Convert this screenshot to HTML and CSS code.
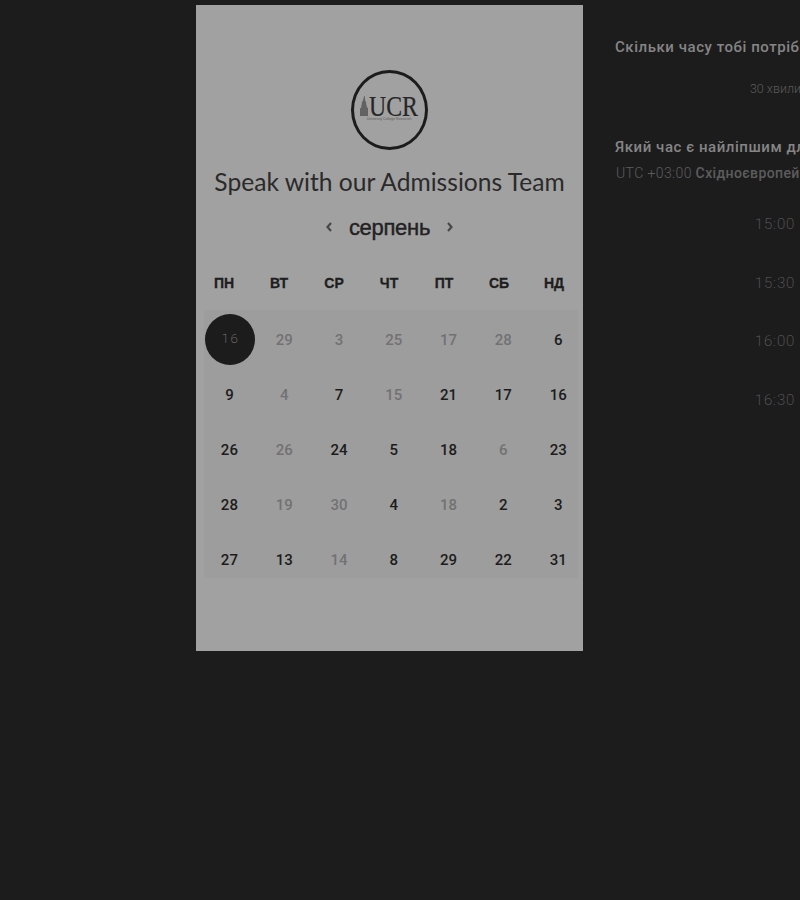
FILE: index.html
```html
<!DOCTYPE html>
<html lang="uk">
<head>
<meta charset="utf-8">
<title>Speak with our Admissions Team</title>
<link rel="stylesheet" href="styles.css">
</head>
<body>
<main class="page">
  <section class="panel">
    <div class="logo">
      <div class="logo-mark">
        <svg class="tower" viewBox="0 0 9 20" width="9" height="20" aria-hidden="true">
          <path d="M4.200 0h.6l.4 5 .9 1v3l.6-.5v2.500l1.300 1V20H0v-7.500l1.300-1V8.500l.6.500V6l.9-1z" fill="#626262"/>
        </svg>
        <span class="logo-letters">UCR</span>
      </div>
      <div class="logo-sub">University College Roosevelt</div>
    </div>
    <h1 class="title">Speak with our Admissions Team</h1>
    <div class="month">
      <svg class="chev" viewBox="0 0 8 12" width="8" height="12" aria-hidden="true"><path d="M6 2 2.500 6 6 10" fill="none" stroke="#484848" stroke-width="2.200"/></svg>
      <span class="month-name">серпень</span>
      <svg class="chev" viewBox="0 0 8 12" width="8" height="12" aria-hidden="true"><path d="M2 2l3.500 4L2 10" fill="none" stroke="#484848" stroke-width="2.200"/></svg>
    </div>
    <div class="weekdays">
      <span>ПН</span><span>ВТ</span><span>СР</span><span>ЧТ</span><span>ПТ</span><span>СБ</span><span>НД</span>
    </div>
    <div class="dates">
      <span class="day selected">16</span><span class="day off">29</span><span class="day off">3</span><span class="day off">25</span><span class="day off">17</span><span class="day off">28</span><span class="day">6</span>
      <span class="day">9</span><span class="day off">4</span><span class="day">7</span><span class="day off">15</span><span class="day">21</span><span class="day">17</span><span class="day">16</span>
      <span class="day">26</span><span class="day off">26</span><span class="day">24</span><span class="day">5</span><span class="day">18</span><span class="day off">6</span><span class="day">23</span>
      <span class="day">28</span><span class="day off">19</span><span class="day off">30</span><span class="day">4</span><span class="day off">18</span><span class="day">2</span><span class="day">3</span>
      <span class="day">27</span><span class="day">13</span><span class="day off">14</span><span class="day">8</span><span class="day">29</span><span class="day">22</span><span class="day">31</span>
    </div>
  </section>
  <section class="side">
    <h2 class="question">Скільки часу тобі потрібно?</h2>
    <p class="duration">30 хвилин</p>
    <h2 class="question second">Який час є найліпшим для тебе?</h2>
    <p class="zone">UTC +03:00 <b>Східноєвропейський час</b></p>
    <ul class="times">
      <li>15:00</li>
      <li>15:30</li>
      <li>16:00</li>
      <li>16:30</li>
    </ul>
  </section>
</main>
</body>
</html>
```

FILE: styles.css
```css
* { box-sizing: border-box; }
html, body { margin: 0; height: 100%; overflow: hidden; background: #1c1c1c; }
.page {
  display: flex;
  align-items: flex-start;
  gap: 32px;
  width: 1200px;
  padding: 5px 0 0 196px;
}
.panel {
  flex: none;
  width: 387px;
  height: 646px;
  padding-top: 65px;
  background: #a1a1a1;
  display: flex;
  flex-direction: column;
  align-items: center;
}
.logo {
  width: 77px;
  height: 80px;
  margin-left: -1px;
  border: 3px solid #1c1c1c;
  border-radius: 50%;
  display: flex;
  flex-direction: column;
  align-items: center;
  justify-content: flex-start;
  padding-top: 23px;
}
.logo-mark { display: flex; align-items: flex-end; height: 20px; margin-left: -2px; }
.tower { flex: none; }
.logo-letters {
  width: 47px;
  font: 29px/20px "Liberation Serif", serif;
  color: #262626;
  -webkit-text-stroke: 0.200px #262626;
  transform: scaleX(0.82);
  transform-origin: left bottom;
}
.logo-sub {
  font: 3.500px/4px "Liberation Sans", sans-serif;
  color: #5a5a5a;
  white-space: nowrap;
  margin-top: 1px;
}
.title {
  margin: 14px 0 0;
  font: 400 24.600px/36px Lato, sans-serif;
  color: #2a2a2a;
  white-space: nowrap;
}
.month {
  display: flex;
  align-items: center;
  gap: 16px;
  height: 30px;
  margin: 13px 0 0;
}
.chev { margin-top: -2px; }
.month-name {
  font: 400 22px/30px "Liberation Sans", sans-serif;
  letter-spacing: -0.300px;
  color: #222;
  -webkit-text-stroke: 0.400px #222;
}
.weekdays {
  display: grid;
  grid-template-columns: repeat(7, 55px);
  width: 385px;
  margin: 30px 0 0 -1px;
  font: 700 14px/20px "Liberation Sans", sans-serif;
  -webkit-text-stroke: 0.300px #1e1e1e;
  text-align: center;
  color: #1e1e1e;
}
.dates {
  display: grid;
  grid-template-columns: repeat(7, 54.800px);
  grid-auto-rows: 54.800px;
  align-items: center;
  justify-items: center;
  width: 374px;
  height: 268px;
  margin: 17px 0 0 3px;
  background: #9d9d9d;
  padding: 2px 0 0;
  font: 500 15px/20px Roboto, sans-serif;
  color: #1c1c1c;
}
.day { transform: translate(-2px, 1px); }
.off { color: #727272; }
.selected {
  width: 50px;
  height: 51px;
  border-radius: 50%;
  background: #1c1c1c;
  color: #7a7a7a;
  font: 200 13.500px/48px Roboto, sans-serif;
  letter-spacing: 1.500px;
  text-align: center;
  transform: translateX(-1px);
}
.side {
  flex: none;
  width: 320px;
  text-align: center;
  font-family: Roboto, sans-serif;
}
.question {
  margin: 32px 0 0;
  font: 500 15px/20px Roboto, sans-serif;
  letter-spacing: 0.550px;
  color: #858585;
  text-align: left;
  white-space: nowrap;
}
.duration {
  margin: 24px 0 0 8px;
  font: 300 12.500px/16px Roboto, sans-serif;
  color: #5a5a5a;
  white-space: nowrap;
}
.second { margin-top: 40px; }
.zone {
  margin: 7px 0 0 1px;
  font: 300 14px/18px Roboto, sans-serif;
  letter-spacing: 0.400px;
  color: #5c5c5c;
  text-align: left;
  white-space: nowrap;
}
.zone b { font-weight: 500; }
.times {
  list-style: none;
  margin: 32px 0 0;
  padding: 0;
  font: 200 15px/20px Roboto, sans-serif;
  letter-spacing: 0.900px;
  color: #626262;
}
.times li { height: 58.700px; }
```
